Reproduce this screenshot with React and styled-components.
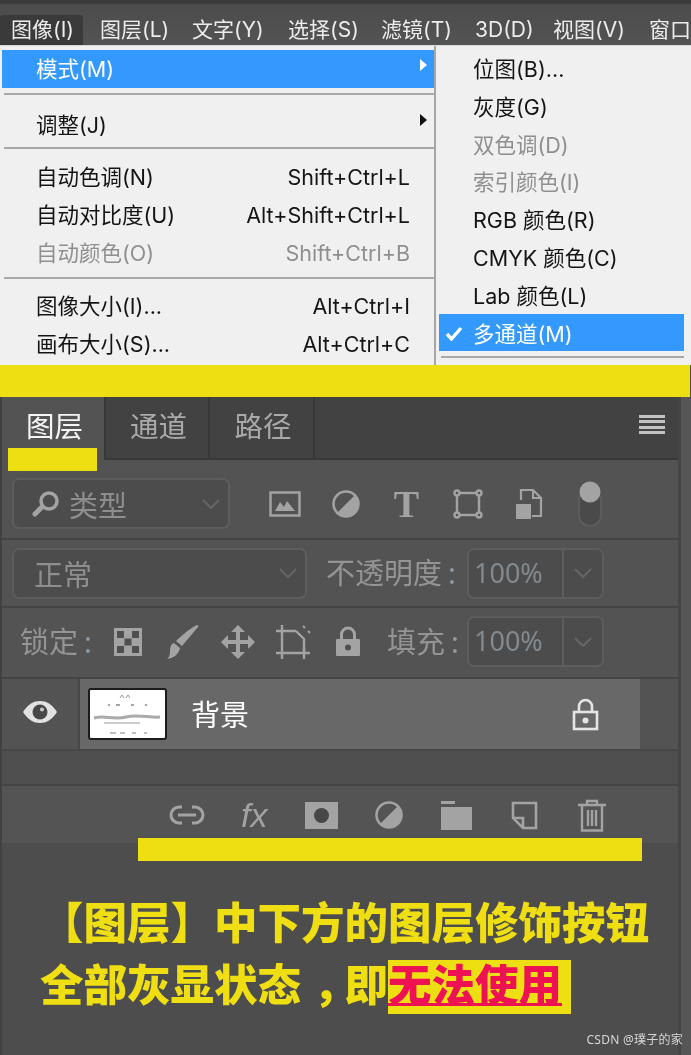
import React from 'react'
import styled, { createGlobalStyle } from 'styled-components'

const GlobalStyle = createGlobalStyle`
  html, body {
    margin: 0;
    padding: 0;
    background: #4d4d4d;
  }
  body {
    font-family: "Noto Sans", "Noto Sans CJK SC", sans-serif;
  }
  * { box-sizing: border-box; }
`

const ICON = '#a3a3a3'
const DARK = '#4f4f4f'
const MENU_FONT = 'Inter, "Noto Sans CJK SC", sans-serif'

const Page = styled.div`
  position: relative;
  width: 691px;
  height: 1055px;
  overflow: hidden;
  background: #4d4d4d;
  filter: blur(0.4px);
`

/* ---------- menu bar ---------- */

const MenuBar = styled.div`
  display: flex;
  height: 45px;
  padding-top: 15px;
  overflow: hidden;
  background: linear-gradient(#3a3a3a 0, #3a3a3a 3px, #4c4c4c 5px, #535353 100%);
`

const BarItem = styled.div`
  flex: none;
  width: ${p => p.$w}px;
  padding-left: ${p => p.$pad}px;
  font-family: ${MENU_FONT};
  font-size: 21px;
  line-height: 30px;
  white-space: nowrap;
  color: #ececec;
  background: ${p => (p.$active ? '#3a3a3a' : 'transparent')};
  border-radius: 3px 3px 0 0;
`

const MenuArea = styled.div`
  display: flex;
  height: 320px;
  border-top: 1px solid #d8d8d8;
  background: #f0f0f0;
`

const MainMenu = styled.div`
  flex: none;
  width: 436px;
  padding: 4px 0 0 2px;
  border-right: 2px solid #a6a6a6;
`

const SubMenu = styled.div`
  flex: 1;
  padding: 3px 7px 0 3px;
`

const Row = styled.div`
  position: relative;
  display: flex;
  align-items: flex-start;
  justify-content: space-between;
  height: 38px;
  padding: 0 24px 0 34px;
  font-family: ${MENU_FONT};
  font-size: 21.5px;
  line-height: 38px;
  white-space: nowrap;
  color: ${p => (p.$selected ? '#fff' : p.$disabled ? '#8f8f8f' : '#141414')};
  background: ${p => (p.$selected ? '#3399ff' : 'transparent')};
`

const Arrow = styled.span`
  position: absolute;
  right: 7px;
  top: ${p => p.$top}px;
  border-left: 7px solid ${p => p.$color};
  border-top: 6px solid transparent;
  border-bottom: 6px solid transparent;
`

const SubRow = styled(Row)`
  height: 37.8px;
  padding-top: 2px;
  line-height: 36px;
`

const Check = styled.svg`
  position: absolute;
  left: 6px;
  top: 12px;
`

const Separator = styled.div`
  height: 2px;
  margin: ${p => p.$top}px 0 ${p => p.$bottom}px 2px;
  background: #a9a9a9;
`

const Band = styled.div`
  width: 690px;
  height: 32px;
  background: #eddf12;
`

/* ---------- layers panel ---------- */

const Panel = styled.div`
  display: flex;
  height: 658px;
`

const PanelBody = styled.div`
  flex: none;
  display: flex;
  flex-direction: column;
  width: 681px;
  border-left: 2px solid #414141;
  border-right: 3px solid #454545;
  background: #535353;
`

const Gutter = styled.div`
  flex: 1;
  background: #565656;
`

const TabBar = styled.div`
  display: flex;
  align-items: stretch;
  height: 63px;
  background: #424242;
`

const Tab = styled.div`
  flex: none;
  width: ${p => p.$w}px;
  padding: 7px 0 0 3px;
  text-align: center;
  font-size: 28.5px;
  line-height: 44px;
  color: ${p => (p.$active ? '#f4f4f4' : '#a9a9a9')};
  background: ${p => (p.$active ? '#535353' : 'transparent')};
  border-right: 2px solid #383838;
  border-bottom: ${p => (p.$active ? '0' : '2px solid #383838')};
`

const TabRest = styled.div`
  flex: 1;
  display: flex;
  justify-content: flex-end;
  padding: 18px 13px 0 0;
  border-bottom: 2px solid #383838;
`

const Burger = styled.div`
  width: 26px;
  height: 19px;
  background: repeating-linear-gradient(#c2c2c2 0, #c2c2c2 3px, #424242 3px, #424242 5.3px);
`

const ToolRow = styled.div`
  display: flex;
  align-items: center;
  height: ${p => p.$h}px;
  padding: ${p => p.$top || 0}px 0 ${p => p.$bottom || 0}px ${p => p.$pad || 10}px;
  border-bottom: 2px solid #444;
`

const SelectBox = styled.div`
  flex: none;
  display: flex;
  align-items: center;
  justify-content: space-between;
  width: ${p => p.$w}px;
  height: 51px;
  padding: 0 8px 0 ${p => p.$pad}px;
  border: 2px solid #5d5d5d;
  border-radius: 7px;
  background: #4c4c4c;
  color: #8e8e8e;
  font-size: 29px;
`

const SelectLabel = styled.span`
  display: flex;
  align-items: center;
  gap: 9px;
`

const IconStrip = styled.div`
  flex: none;
  display: flex;
  margin-left: ${p => p.$ml}px;
`

const Slot = styled.div`
  flex: none;
  display: flex;
  align-items: center;
  justify-content: center;
  width: ${p => p.$w}px;
  height: ${p => p.$h || 48}px;
`

const FieldLabel = styled.span`
  flex: none;
  margin-left: ${p => p.$ml}px;
  width: ${p => p.$w}px;
  font-size: 29px;
  line-height: 40px;
  white-space: nowrap;
  color: #949494;
`

const Colon = styled.span`
  margin-left: 6px;
  color: #8f9aa3;
`

const PercentBox = styled.div`
  flex: none;
  display: flex;
  width: 137px;
  height: 51px;
  margin-left: ${p => p.$ml || 0}px;
  border: 2px solid #5d5d5d;
  border-radius: 7px;
  background: #4c4c4c;
`

const PercentValue = styled.div`
  flex: 1;
  padding-left: 5px;
  font-size: 27px;
  line-height: 46px;
  color: #828a90;
  border-right: 2px solid #5d5d5d;
`

const PercentCaret = styled.div`
  flex: none;
  display: flex;
  align-items: center;
  justify-content: center;
  width: 38px;
`

const LayerRow = styled.div`
  display: flex;
  height: 72px;
  border-bottom: 2px solid #474747;
`

const EyeCell = styled.div`
  flex: none;
  display: flex;
  align-items: center;
  justify-content: center;
  width: 78px;
  padding-bottom: 4px;
  border-right: 2px solid #474747;
`

const LayerBody = styled.div`
  flex: none;
  display: flex;
  align-items: center;
  width: 560px;
  padding: 0 41px 0 8px;
  background: #686868;
`

const Thumb = styled.svg`
  flex: none;
  display: block;
`

const LayerName = styled.span`
  flex: 1;
  margin-left: 24px;
  padding-bottom: 3px;
  font-size: 29px;
  color: #fff;
`

const EmptyList = styled.div`
  height: 35px;
  background: #4f4f4f;
  border-bottom: 2px solid #444;
`

const Footer = styled.div`
  display: flex;
  height: 57px;
  padding: 6px 0 0 151px;
  background: #545454;
`

const Note = styled.div`
  flex: 1;
  padding: 47px 0 0 38px;
  background: #4d4d4d;
  font-family: "Noto Sans CJK SC", sans-serif;
  font-weight: 900;
  font-size: 43.5px;
  line-height: 62px;
  white-space: nowrap;
  color: #eede12;
`

/* half-width comma, set in the middle of its full-width cell */
const Comma = styled.span`
  font-feature-settings: "halt";
  margin: 0 9.75px 0 12px;
`

const Mark = styled.span`
  display: inline-block;
  height: 54px;
  padding-right: 9px;
  line-height: 46px;
  background: #eddf12;
  color: #ee1153;
  text-decoration: underline;
  text-decoration-thickness: 3px;
  text-underline-offset: 2px;
`

const GlyphIcon = styled.span`
  font-family: ${p => p.$font};
  font-size: ${p => p.$size}px;
  font-weight: ${p => p.$weight || 400};
  font-style: ${p => (p.$italic ? 'italic' : 'normal')};
  line-height: 1;
  color: ${ICON};
`

/* things that lie over the panel */

const TabMarker = styled.div`
  position: absolute;
  left: 8px;
  top: 448px;
  width: 89px;
  height: 23px;
  background: #eddf12;
`

const FooterMarker = styled.div`
  position: absolute;
  left: 138px;
  top: 838px;
  width: 504px;
  height: 23px;
  background: #eddf12;
`

const Watermark = styled.div`
  position: absolute;
  right: 8px;
  bottom: 7px;
  font-size: 12px;
  line-height: 16px;
  letter-spacing: 0.25px;
  color: #d6d6d6;
`

/* ---------- icons ---------- */

const Chevron = ({ color = '#666' }) => (
  <svg width="18" height="10" viewBox="0 0 18 10" fill="none" stroke={color} strokeWidth="2">
    <path d="M1 1l8 8 8-8" />
  </svg>
)

const Search = () => (
  <svg width="28" height="28" viewBox="0 0 28 28" fill="none">
    <circle cx="17" cy="11" r="8" stroke={ICON} strokeWidth="3.5" />
    <path d="M10 17l-7 7" stroke={ICON} strokeWidth="5" strokeLinecap="round" />
  </svg>
)

const ImageIcon = () => (
  <svg width="32" height="26" viewBox="0 0 32 26">
    <rect x="1.5" y="1.5" width="29" height="23" fill="none" stroke={ICON} strokeWidth="2.5" />
    <path d="M6 20l5-9 4 5 3-6 8 10z" fill={ICON} />
  </svg>
)

const HalfCircle = ({ size = 28 }) => (
  <svg width={size} height={size} viewBox="0 0 28 28">
    <circle cx="14" cy="14" r="12.5" fill="none" stroke={ICON} strokeWidth="2.6" />
    <path d="M23 5A12.6 12.6 0 0 1 5 23z" fill={ICON} />
  </svg>
)

const Transform = () => (
  <svg width="30" height="30" viewBox="0 0 30 30" fill="none" stroke={ICON} strokeWidth="2.4">
    <rect x="4" y="4" width="22" height="22" />
    <circle cx="4" cy="4" r="2.5" fill="#535353" />
    <circle cx="26" cy="4" r="2.5" fill="#535353" />
    <circle cx="4" cy="26" r="2.5" fill="#535353" />
    <circle cx="26" cy="26" r="2.5" fill="#535353" />
  </svg>
)

const SmartDoc = () => (
  <svg width="28" height="32" viewBox="0 0 28 32">
    <path d="M6 12V2h12l8 8v18H17" fill="none" stroke={ICON} strokeWidth="2.2" />
    <path d="M18 2v8h8" fill="none" stroke={ICON} strokeWidth="2" />
    <rect x="1" y="16" width="15" height="15" fill={ICON} />
  </svg>
)

const Toggle = () => (
  <svg width="26" height="46" viewBox="0 0 26 46">
    <rect x="2" y="8" width="22" height="37" rx="11" fill="#4a4a4a" stroke="#5c5c5c" strokeWidth="2" />
    <circle cx="13" cy="11" r="10.5" fill={ICON} />
  </svg>
)

const Checker = () => (
  <svg width="28" height="28" viewBox="0 0 28 28">
    <rect width="28" height="28" fill={ICON} />
    <rect x="3" y="3" width="7" height="7" fill={DARK} />
    <rect x="18" y="3" width="7" height="7" fill={DARK} />
    <rect x="10.5" y="10.5" width="7" height="7" fill={DARK} />
    <rect x="3" y="18" width="7" height="7" fill={DARK} />
    <rect x="18" y="18" width="7" height="7" fill={DARK} />
  </svg>
)

const Brush = () => (
  <svg width="32" height="36" viewBox="0 0 32 36" fill={ICON}>
    <path d="M30 1c1 0 2 1 1 2L15 22l-6-5C16 10 24 4 30 1z" />
    <path d="M7 19l6 5c-1 6-6 10-13 11 3-2 3-6 3-9 0-3 1-6 4-7z" />
  </svg>
)

const MoveIcon = () => (
  <svg width="34" height="34" viewBox="0 0 34 34" fill={ICON}>
    <path d="M17 0l7 7h-5v8h8v-5l7 7-7 7v-5h-8v8h5l-7 7-7-7h5v-8H7v5l-7-7 7-7v5h8V7h-5z" />
  </svg>
)

const Artboard = () => (
  <svg width="36" height="36" viewBox="0 0 36 36" fill="none" stroke={ICON} strokeWidth="2.4">
    <path d="M7 1v34M29 24v11M1 7h20M1 29h34" />
    <path d="M21 7l8 8v14" />
    <path d="M28 2l2 2M33 7l2 2" strokeWidth="2" />
  </svg>
)

const Lock = ({ w = 26, color = ICON, hole = DARK }) => (
  <svg width={w} height={w * 1.2} viewBox="0 0 26 31">
    <path d="M6.5 13V8.5a6.5 6.5 0 0 1 13 0V13" fill="none" stroke={color} strokeWidth="3" />
    <rect x="1" y="13" width="24" height="17" rx="1" fill={color} />
    <circle cx="13" cy="21.5" r="3" fill={hole} />
  </svg>
)

const LayerLock = () => (
  <svg width="27" height="33" viewBox="0 0 27 33" fill="none" stroke="#e4e4e4">
    <path d="M7 14V8.5a6.5 6.5 0 0 1 13 0V14" strokeWidth="2.6" />
    <rect x="2" y="14" width="23" height="17" strokeWidth="2.6" />
    <circle cx="13.5" cy="22.5" r="3" fill="#e4e4e4" stroke="none" />
  </svg>
)

const Eye = () => (
  <svg width="34" height="22" viewBox="0 0 34 22">
    <path d="M0 11C5 3 11 0 17 0s12 3 17 11c-5 8-11 11-17 11S5 19 0 11z" fill="#e2e2e2" />
    <circle cx="17" cy="11" r="7.5" fill="#474747" />
    <circle cx="19" cy="8.5" r="2" fill="#c8c8c8" />
  </svg>
)

const LinkIcon = () => (
  <svg width="38" height="24" viewBox="0 0 38 24" fill="none" stroke={ICON} strokeWidth="3">
    <path d="M14 4H11a8 8 0 0 0 0 16h3M24 4h3a8 8 0 0 1 0 16h-3M10 12h18" />
  </svg>
)

const MaskIcon = () => (
  <svg width="33" height="27" viewBox="0 0 33 27">
    <rect width="33" height="27" fill={ICON} />
    <circle cx="16.5" cy="13.5" r="7.5" fill="#474747" />
  </svg>
)

const FolderIcon = () => (
  <svg width="31" height="29" viewBox="0 0 31 29" fill={ICON}>
    <rect x="0" y="0" width="14" height="3" />
    <rect x="0" y="6" width="31" height="23" />
  </svg>
)

const NewLayer = () => (
  <svg width="27" height="29" viewBox="0 0 27 29" fill="none" stroke={ICON} strokeWidth="2.6">
    <path d="M2 2h23v25H12L2 17z" />
    <path d="M2 17h10v10" />
  </svg>
)

const Trash = () => (
  <svg width="28" height="33" viewBox="0 0 28 33" fill="none" stroke={ICON} strokeWidth="2.4">
    <path d="M0 6h28M9 6V2h10v4" />
    <path d="M4 6v25.5h20V6" />
    <path d="M10 11v16M14 11v16M18 11v16" />
  </svg>
)

const ThumbArt = () => (
  <Thumb width="79" height="52" viewBox="0 0 79 52">
    <rect x="1" y="1" width="77" height="50" rx="2" fill="#fff" stroke="#1c1c1c" strokeWidth="2" />
    <path d="M32 10l2-3 2 3M38 10l2-3 2 3" stroke="#999" fill="none" />
    <path d="M20 17h2M28 17h4M43 17h3M57 17h2" stroke="#888" strokeWidth="1.5" />
    <path d="M6 30c10-3 20 2 32-1s24 1 34 0" stroke="#aaa" strokeWidth="3" fill="none" />
    <path d="M16 35h36" stroke="#bbb" strokeWidth="1.5" />
    <path d="M22 45h6M32 45h5M44 45h4M56 45h3" stroke="#aaa" strokeWidth="1.5" />
  </Thumb>
)

/* ---------- data ---------- */

const barItems = [
  { label: '图像(I)', w: 83, pad: 11, active: true },
  { label: '图层(L)', w: 109, pad: 17 },
  { label: '文字(Y)', w: 96, pad: 0 },
  { label: '选择(S)', w: 93, pad: 0 },
  { label: '滤镜(T)', w: 94, pad: 0 },
  { label: '3D(D)', w: 78, pad: 0 },
  { label: '视图(V)', w: 96, pad: 0 },
  { label: '窗口', w: 60, pad: 0 },
]

const subItems = [
  { label: '位图(B)...' },
  { label: '灰度(G)' },
  { label: '双色调(D)', disabled: true },
  { label: '索引颜色(I)', disabled: true },
  { label: 'RGB 颜色(R)' },
  { label: 'CMYK 颜色(C)' },
  { label: 'Lab 颜色(L)' },
]

const filterIcons = [
  <ImageIcon />,
  <HalfCircle />,
  <GlyphIcon $font='"Liberation Serif", serif' $size={38} $weight={700}>T</GlyphIcon>,
  <Transform />,
  <SmartDoc />,
  <Toggle />,
]
const lockIcons = [<Checker />, <Brush />, <MoveIcon />, <Artboard />, <Lock />]
const footerIcons = [
  <LinkIcon />,
  <GlyphIcon $font='"Liberation Sans", sans-serif' $size={34} $italic>fx</GlyphIcon>,
  <MaskIcon />,
  <HalfCircle />,
  <FolderIcon />,
  <NewLayer />,
  <Trash />,
]

export default function App() {
  return (
    <Page>
      <GlobalStyle />

      <MenuBar>
        {barItems.map(item => (
          <BarItem key={item.label} $w={item.w} $pad={item.pad} $active={item.active}>
            {item.label}
          </BarItem>
        ))}
      </MenuBar>

      <MenuArea>
        <MainMenu>
          <Row $selected>
            模式(M)
            <Arrow $top={9} $color="#fff" />
          </Row>
          <Separator $top={5} $bottom={11} />
          <Row>
            调整(J)
            <Arrow $top={8} $color="#111" />
          </Row>
          <Separator $top={3} $bottom={9} />
          <Row>自动色调(N)<span>Shift+Ctrl+L</span></Row>
          <Row>自动对比度(U)<span>Alt+Shift+Ctrl+L</span></Row>
          <Row $disabled>自动颜色(O)<span>Shift+Ctrl+B</span></Row>
          <Separator $top={5} $bottom={8} />
          <Row>图像大小(I)...<span>Alt+Ctrl+I</span></Row>
          <Row>画布大小(S)...<span>Alt+Ctrl+C</span></Row>
        </MainMenu>

        <SubMenu>
          {subItems.map(item => (
            <SubRow key={item.label} $disabled={item.disabled}>{item.label}</SubRow>
          ))}
          <SubRow $selected>
            <Check width="18" height="15" viewBox="0 0 18 15" fill="none" stroke="#fff" strokeWidth="3.4">
              <path d="M2 8l4.5 5L16 2" />
            </Check>
            多通道(M)
          </SubRow>
          <Separator $top={5} $bottom={0} />
        </SubMenu>
      </MenuArea>

      <Band />

      <Panel>
        <PanelBody>
          <TabBar>
            <Tab $w={104} $active>图层</Tab>
            <Tab $w={104}>通道</Tab>
            <Tab $w={105}>路径</Tab>
            <TabRest><Burger /></TabRest>
          </TabBar>

          <ToolRow $h={80} $top={9}>
            <SelectBox $w={218} $pad={18}>
              <SelectLabel><Search />类型</SelectLabel>
              <Chevron />
            </SelectBox>
            <IconStrip $ml={24}>
              {filterIcons.map((icon, i) => <Slot key={i} $w={61}>{icon}</Slot>)}
            </IconStrip>
          </ToolRow>

          <ToolRow $h={68}>
            <SelectBox $w={295} $pad={20}>
              正常
              <Chevron />
            </SelectBox>
            <FieldLabel $ml={19} $w={130}>不透明度<Colon>:</Colon></FieldLabel>
            <PercentBox $ml={11}>
              <PercentValue>100%</PercentValue>
              <PercentCaret><Chevron /></PercentCaret>
            </PercentBox>
          </ToolRow>

          <ToolRow $h={71} $pad={18} $bottom={2}>
            <FieldLabel $ml={0} $w={80}>锁定<Colon>:</Colon></FieldLabel>
            <IconStrip $ml={0}>
              {lockIcons.map((icon, i) => <Slot key={i} $w={55}>{icon}</Slot>)}
            </IconStrip>
            <FieldLabel $ml={12} $w={80}>填充<Colon>:</Colon></FieldLabel>
            <PercentBox>
              <PercentValue>100%</PercentValue>
              <PercentCaret><Chevron /></PercentCaret>
            </PercentBox>
          </ToolRow>

          <LayerRow>
            <EyeCell><Eye /></EyeCell>
            <LayerBody>
              <ThumbArt />
              <LayerName>背景</LayerName>
              <LayerLock />
            </LayerBody>
          </LayerRow>
          <EmptyList />

          <Footer>
            {footerIcons.map((icon, i) => <Slot key={i} $w={67.5} $h={46}>{icon}</Slot>)}
          </Footer>

          <Note>
            <div>【图层】中下方的图层修饰按钮</div>
            <div>全部灰显状态<Comma>，</Comma>即<Mark>无法使用</Mark></div>
          </Note>
        </PanelBody>
        <Gutter />
      </Panel>

      <TabMarker />
      <FooterMarker />
      <Watermark>CSDN @璞子的家</Watermark>
    </Page>
  )
}
